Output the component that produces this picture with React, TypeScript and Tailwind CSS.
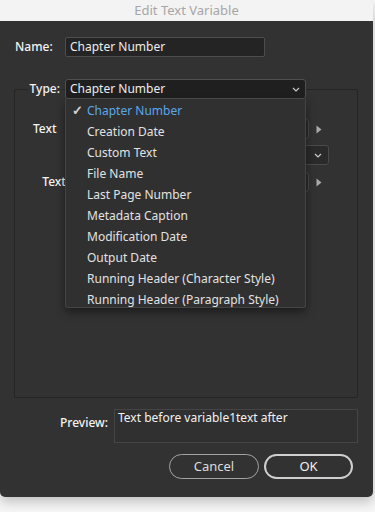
import React from "react";

const font = { fontFamily: '"Noto Sans", "Open Sans", sans-serif' };

const typeOptions = [
  "Chapter Number",
  "Creation Date",
  "Custom Text",
  "File Name",
  "Last Page Number",
  "Metadata Caption",
  "Modification Date",
  "Output Date",
  "Running Header (Character Style)",
  "Running Header (Paragraph Style)",
];

const Chevron = () => (
  <svg width="8" height="5" viewBox="0 0 8 5" className="shrink-0">
    <path d="M1 1l3 3 3-3" fill="none" stroke="#c8c8c8" strokeWidth="1.2" />
  </svg>
);

const SideArrow = () => (
  <div className="flex w-[20px] items-center justify-center">
    <svg width="6" height="9" viewBox="0 0 6 9">
      <path d="M0.5 0.5L5.5 4.5L0.5 8.5Z" fill="#a9a9a9" />
    </svg>
  </div>
);

export default function App() {
  return (
    <div className="h-[512px] w-[375px] overflow-hidden bg-[#f6f6f6]" style={font}>
      <div className="w-[373px] overflow-hidden rounded-tr-[6px] rounded-b-[5px] shadow-[0_5px_12px_rgba(0,0,0,0.22)]">
        {/* Title bar */}
        <div className="flex h-[21px] items-center justify-center bg-[#f3f3f3] text-[13px] text-[#a6a6a6]">
          Edit Text Variable
        </div>

        {/* Body */}
        <div className="flex h-[476px] flex-col bg-[#323232] pl-[14px] pr-[15px] text-[12px] text-[#e6e6e6]">
          {/* Name */}
          <div className="mt-[16px] flex h-[20px] items-center">
            <div className="w-[51px] pl-px font-medium text-[#f2f2f2]">Name:</div>
            <div className="flex h-[20px] w-[200px] items-center rounded-[2px] border border-[#4d4d4d] bg-[#242424] pl-[4px] text-[#ededed]">
              Chapter Number
            </div>
          </div>

          {/* Group box */}
          <div className="mt-[32px] h-[309px] rounded-[2px] border border-[#252525]">
            {/* Type */}
            <div className="-mt-[11px] flex h-[20px] items-center">
              <div className="flex w-[50px] justify-end pr-[3px]">
                <span className="bg-[#323232] px-[2px] font-medium text-[#f2f2f2]">Type:</span>
              </div>
              <div className="relative">
                <div className="flex h-[20px] w-[241px] items-center justify-between rounded-[3px] border border-[#4f4f4f] bg-[#1f1f1f] pl-[4px] pr-[5px] text-[#ededed]">
                  <span>Chapter Number</span>
                  <Chevron />
                </div>
                {/* Open menu */}
                <div className="absolute left-0 top-[20px] z-10 h-[209px] w-[241px] overflow-hidden rounded-b-[3px] border border-t-0 border-[#444] bg-[#303030] pt-px shadow-[0_4px_10px_rgba(0,0,0,0.45)]">
                  {typeOptions.map((opt, i) => (
                    <div key={opt} className="flex h-[21px] items-center">
                      <span className="w-[21px] pl-[6px] text-[13px] font-bold leading-none text-[#d0d0d0]">{i === 0 ? "✓" : ""}</span>
                      <span className={i === 0 ? "text-[#5aa8ea]" : "text-[#e2e2e2]"}>{opt}</span>
                    </div>
                  ))}
                </div>
              </div>
            </div>

            {/* Text Before */}
            <div className="mt-[20px] flex h-[20px] items-center">
              <div className="w-[99px] shrink-0 pr-[6px] text-right font-medium text-[#f2f2f2] [word-spacing:7px]">Text Before:</div>
              <div className="h-[20px] w-[195px] rounded-[3px] border border-[#4a4a4a] bg-[#2a2a2a]" />
              <SideArrow />
            </div>

            {/* Format */}
            <div className="mt-[6px] flex h-[20px] items-center">
              <div className="w-[99px] shrink-0" />
              <div className="flex h-[20px] w-[215px] items-center justify-end rounded-[3px] border border-[#4a4a4a] bg-[#2a2a2a] pr-[6px]">
                <Chevron />
              </div>
            </div>

            {/* Text After */}
            <div className="mt-[7px] flex h-[20px] items-center">
              <div className="w-[99px] shrink-0 pr-[6px] text-right font-medium text-[#f2f2f2] [word-spacing:7px]">Text After:</div>
              <div className="h-[20px] w-[195px] rounded-[3px] border border-[#4a4a4a] bg-[#2a2a2a]" />
              <SideArrow />
            </div>
          </div>

          {/* Preview */}
          <div className="mt-[11px] flex items-start">
            <div className="w-[100px] shrink-0 pr-[6px] pt-[5px] text-right font-medium text-[#f2f2f2]">Preview:</div>
            <div className="h-[34px] w-[244px] border border-[#454545] bg-[#303030] pl-[3px] text-[12px] leading-[16px] text-[#f2f2f2]">
              Text before variable1text after
            </div>
          </div>

          {/* Buttons */}
          <div className="mt-[11px] flex justify-end gap-[5px] pr-[5px]">
            <button className="h-[25px] w-[90px] rounded-full border border-[#a3a3a3] text-[13px] text-[#dcdcdc]">
              Cancel
            </button>
            <button className="h-[25px] w-[89px] rounded-full border-2 border-[#cfcfcf] text-[13px] text-[#f0f0f0]">
              OK
            </button>
          </div>
        </div>
      </div>
    </div>
  );
}
